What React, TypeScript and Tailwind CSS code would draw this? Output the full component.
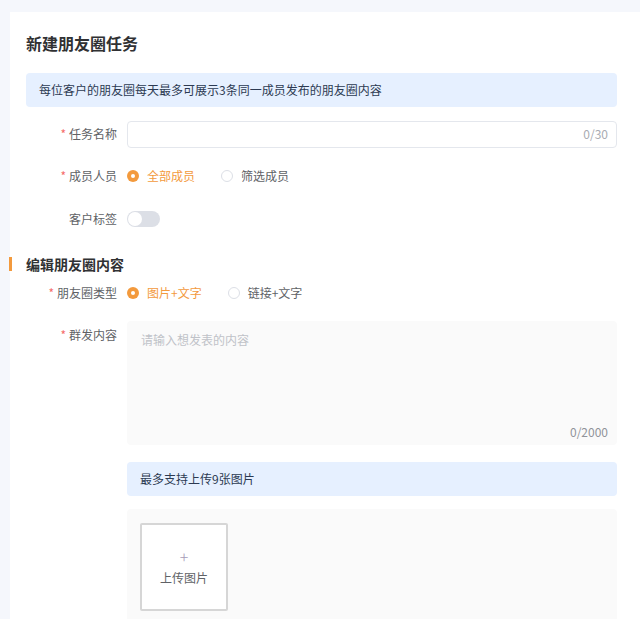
import React from 'react';

const font = { fontFamily: '"Noto Sans CJK SC", "Noto Sans", sans-serif' };

function Label({ children, required }: { children: React.ReactNode; required?: boolean }) {
  return (
    <div className="w-[91px] mr-[10px] shrink-0 text-right text-[12px] text-[#606266] leading-[28px]">
      {required && <span className="text-[#f56c6c] mr-[3px]">*</span>}
      {children}
    </div>
  );
}

function Radio({ label, checked }: { label: string; checked?: boolean }) {
  return (
    <div className="flex items-center mr-[26px]">
      {checked ? (
        <span className="w-[12px] h-[12px] rounded-full bg-[#f39a3d] flex items-center justify-center">
          <span className="w-[4px] h-[4px] rounded-full bg-white" />
        </span>
      ) : (
        <span className="w-[12px] h-[12px] rounded-full border border-[#dcdfe6] bg-white" />
      )}
      <span className={`ml-[8px] text-[12px] ${checked ? 'text-[#f39a3d]' : 'text-[#606266]'}`}>{label}</span>
    </div>
  );
}

export default function App() {
  return (
    <div className="min-h-[619px] bg-[#f5f7fc] pt-[12px] pl-[10px] overflow-hidden" style={font}>
      <div className="bg-white min-h-[607px] pl-[16px] pr-[23px] pt-[20px]">
        <h1 className="text-[16px] leading-[22px] font-bold text-[#303133]">新建朋友圈任务</h1>

        <div className="mt-[19px] h-[34px] rounded-[4px] bg-[#e6f0ff] flex items-center px-[13px] text-[12px] text-[#2c3a52]">
          每位客户的朋友圈每天最多可展示3条同一成员发布的朋友圈内容
        </div>

        <div className="flex items-center mt-[13px]">
          <Label required>任务名称</Label>
          <div className="flex-1 h-[27px] border border-[#e4e7ed] rounded-[4px] flex items-center justify-end pr-[8px] text-[12px] text-[#a8abb2]">
            0/30
          </div>
        </div>

        <div className="flex items-center mt-[14px]">
          <Label required>成员人员</Label>
          <Radio label="全部成员" checked />
          <Radio label="筛选成员" />
        </div>

        <div className="flex items-center mt-[15px]">
          <Label>客户标签</Label>
          <div className="w-[33px] h-[16px] rounded-full bg-[#dcdfe6] p-[1px] flex items-center">
            <span className="w-[14px] h-[14px] rounded-full bg-white" />
          </div>
        </div>

        <div className="-ml-[17px] mt-[24px] border-l-[3px] border-[#f39a3d] pl-[14px] h-[14px] flex items-center">
          <span className="text-[14px] font-bold text-[#303133]">编辑朋友圈内容</span>
        </div>

        <div className="flex items-center mt-[8px]">
          <Label required>朋友圈类型</Label>
          <Radio label="图片+文字" checked />
          <Radio label="链接+文字" />
        </div>

        <div className="flex mt-[14px]">
          <Label required>群发内容</Label>
          <div className="flex-1">
            <div className="h-[124px] rounded-[4px] bg-[#fafafa] flex flex-col justify-between px-[14px] pt-[10px] pb-[4px] text-[12px]">
              <span className="text-[#bfc2c8]">请输入想发表的内容</span>
              <span className="self-end text-[#909399] -mr-[5px]">0/2000</span>
            </div>
            <div className="mt-[17px] h-[34px] rounded-[4px] bg-[#e6f0ff] flex items-center px-[13px] text-[12px] text-[#2c3a52]">
              最多支持上传9张图片
            </div>
            <div className="mt-[13px] bg-[#fafafa] pt-[14px] pl-[13px] pb-[20px] rounded-t-[4px]">
              <div className="w-[88px] h-[88px] bg-white border-2 border-[#d6d6d6] rounded-[2px] flex flex-col items-center justify-center">
                <span className="text-[16px] leading-[16px] text-[#a69cb8] font-light">+</span>
                <span className="mt-[5px] text-[12px] text-[#606266]">上传图片</span>
              </div>
            </div>
          </div>
        </div>
      </div>
    </div>
  );
}
